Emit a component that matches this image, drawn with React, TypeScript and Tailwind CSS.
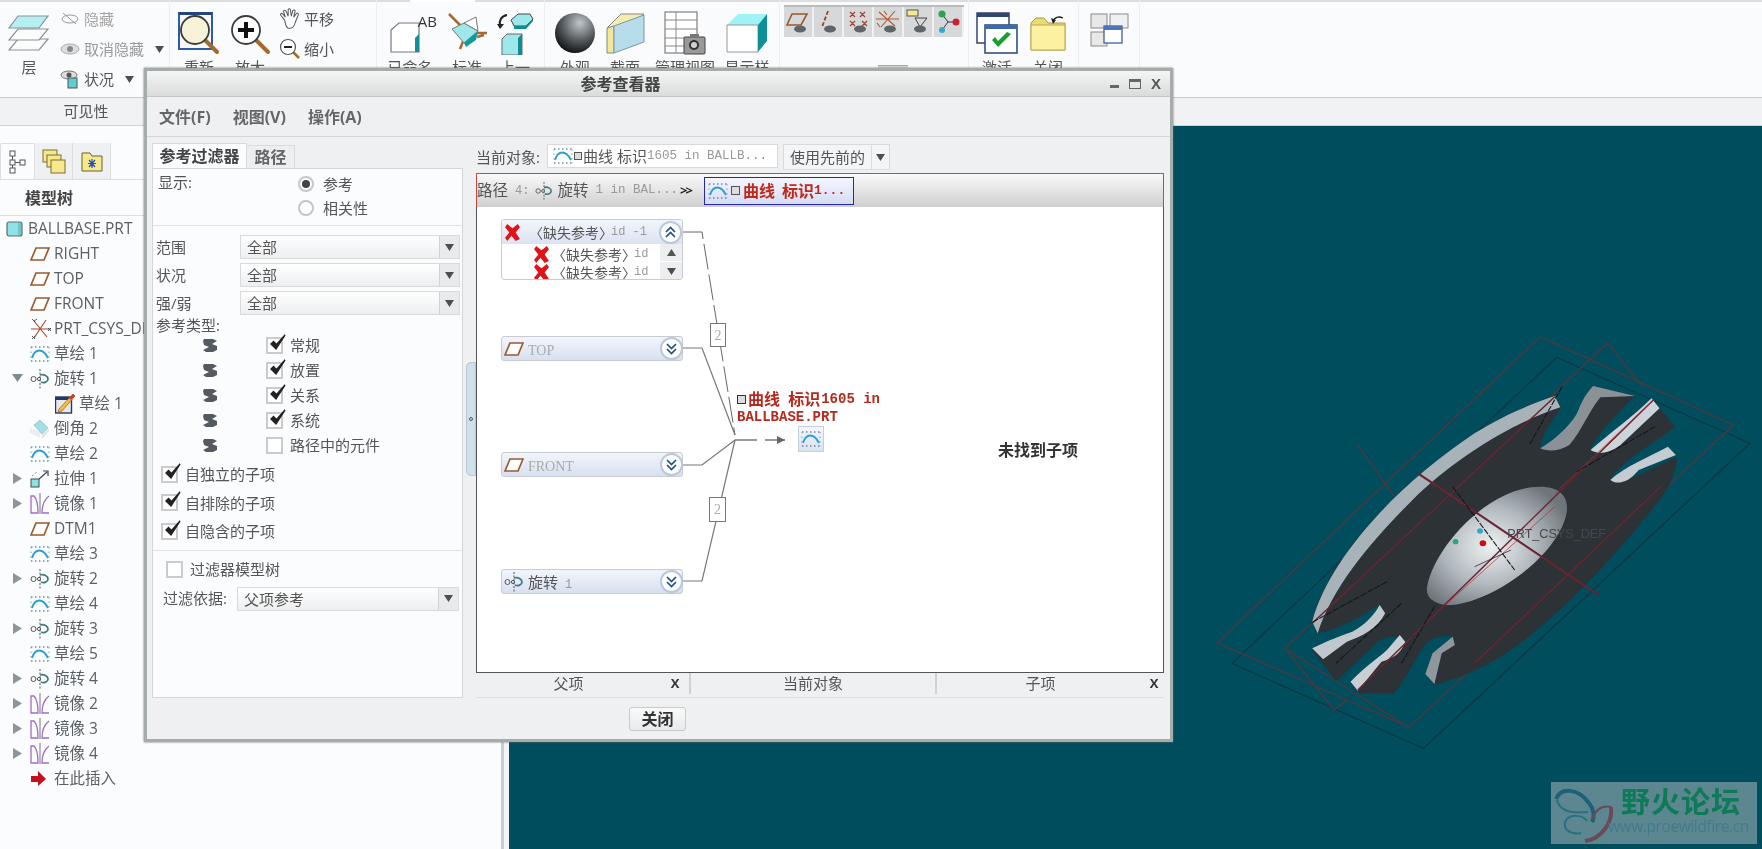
import React from "react";

const sans = "font-['Open_Sans','Noto_Sans_CJK_SC',sans-serif]";
const mono = "font-['Liberation_Mono','Noto_Sans_CJK_SC',monospace]";
const serif = "font-['Liberation_Serif','Noto_Sans_CJK_SC',serif]";

const Plane = ({ s = 20 }: { s?: number }) => (
  <svg width={s} height={s * 0.8} viewBox="0 0 20 16"><path d="M6 2H19L14 14H1Z" fill="#fff" stroke="#9a5a2c" strokeWidth="1.7" /></svg>
);
const Sketch = () => (
  <svg width="20" height="20" viewBox="0 0 20 20">
    <path d="M1 3H19M1 17H19" stroke="#33567a" strokeWidth="1.1" strokeDasharray="1.5 2.5" />
    <path d="M1 3V17M19 3V17" stroke="#7aa" strokeWidth="1" strokeDasharray="1.5 3" />
    <path d="M2 14C5 4 13 4 18 14" fill="none" stroke="#2c9fd0" strokeWidth="1.8" />
  </svg>
);
const Revolve = ({ s = 20 }: { s?: number }) => (
  <svg width={s} height={s} viewBox="0 0 20 20" fill="none">
    <path d="M10 0V20" stroke="#555" strokeWidth="1" strokeDasharray="2 1.5" />
    <circle cx="3.5" cy="10" r="2.5" stroke="#555" />
    <path d="M10 6C14 5 18 7 18 10C18 13 14 14.5 11 13" stroke="#3c7d83" strokeWidth="1.8" />
    <circle cx="9" cy="10" r="1.6" stroke="#555" />
  </svg>
);
const Mirror = () => (
  <svg width="20" height="21" viewBox="0 0 20 21" fill="none" stroke="#a06cc8" strokeWidth="1.3">
    <path d="M1 3H4C7 6 8 12 8 20H1Z" />
    <path d="M19 3C15 6 12 12 12 20H19" />
    <path d="M10 0V21" stroke="#777" strokeWidth="1" />
  </svg>
);
const Extrude = () => (
  <svg width="20" height="20" viewBox="0 0 20 20" fill="none">
    <rect x="1" y="10" width="8" height="8" fill="#8fe0e0" stroke="#445" />
    <path d="M9 10L17 3M13 2H18V7" stroke="#445" strokeWidth="1.2" />
    <path d="M2 7L7 3" stroke="#888" strokeDasharray="2 2" />
  </svg>
);
const SketchEdit = () => (
  <svg width="20" height="21" viewBox="0 0 20 21">
    <rect x="0.5" y="4" width="16" height="16" fill="#e8e8e8" stroke="#223a6a" strokeWidth="1.4" />
    <rect x="0.5" y="4" width="16" height="3" fill="#223a6a" />
    <path d="M4 16L18 1L20 3L7 18L3 19Z" fill="#f0c040" stroke="#a05020" strokeWidth=".7" />
    <path d="M14 5L18 1L20 3L16 7Z" fill="#d04020" />
  </svg>
);
const Chamfer = () => (
  <svg width="20" height="20" viewBox="0 0 20 20">
    <path d="M0 14L10 19V13L0 9Z" fill="#eee" />
    <path d="M4 6L10 1L18 9L12 15Z" fill="#9fe0e6" stroke="#8ab" strokeWidth=".6" />
    <path d="M12 15V20L19 12L18 9Z" fill="#e4e4e4" />
  </svg>
);
const Csys = () => (
  <svg width="22" height="22" viewBox="0 0 22 22" stroke="#444" strokeWidth=".9" fill="none">
    <path d="M4 3L17 19M16 2L4 20M1 11H21" stroke="#a8462a" strokeWidth="1.1" />
    <path d="M2 1L5 4M7 1L4 3M18 10L21 13M21 10L18 13M2 18L5 21M5 18L2 21" />
  </svg>
);
const Part = () => (
  <svg width="17" height="16" viewBox="0 0 17 16"><rect x="1" y="1" width="15" height="14" rx="2" fill="#8fe3e6" stroke="#5a6a70" strokeWidth="1.2" /><path d="M12 1H15V15H12Z" fill="#5aa" opacity=".5" /></svg>
);
const RedX = ({ s = 17 }: { s?: number }) => (
  <svg width={s} height={s} viewBox="0 0 16 16"><path d="M3 0L8 4L13 0L15 3L11 8L15 14L11 16L7 11L3 16L1 13L5 8L1 3Z" fill="#e01418" /></svg>
);
const Zig = () => (
  <svg width="16" height="15" viewBox="0 0 16 15"><path d="M2 1H11L15 3L10 6L15 8V12L11 14H4L1 12L7 9L2 7L1 3Z" fill="#555a62" /></svg>
);
const Tri = ({ open }: { open?: boolean }) => (
  <svg width="11" height="11" viewBox="0 0 11 11">{open ? <path d="M0 1H11L5.5 9Z" fill="#7d8a92" /> : <path d="M1 0L10 5.5L1 11Z" fill="#8b959c" />}</svg>
);
const Down = ({ c = "#4a4f55" }: { c?: string }) => (
  <svg width="9" height="7" viewBox="0 0 9 7"><path d="M0 0H9L4.5 7Z" fill={c} /></svg>
);
const Check = ({ on = true }: { on?: boolean }) => (
  <span className="relative block w-[17px] h-[17px] shrink-0 border-2 border-[#c9cbcd] bg-white">
    {on && (
      <svg className="absolute left-[1px] top-[-6px]" width="20" height="20" viewBox="0 0 20 20"><path d="M2 11L7 16L16 2L7.5 11.5L4.5 8.5Z" fill="#222" stroke="#222" strokeWidth="1.4" /></svg>
    )}
  </span>
);
const Radio = ({ on }: { on?: boolean }) => (
  <span className="flex items-center justify-center w-[16px] h-[16px] rounded-full border-2 border-[#c4c6c8] bg-white">
    {on && <span className="w-[8px] h-[8px] rounded-full bg-[#444]" />}
  </span>
);
const Chev = ({ up }: { up?: boolean }) => (
  <span className="flex items-center justify-center w-[23px] h-[23px] rounded-full bg-white border-2 border-[#b9c8dc]">
    <svg width="11" height="12" viewBox="0 0 11 12" fill="none" stroke="#1f4f86" strokeWidth="1.7">
      {up ? <path d="M1 6L5.5 1.5L10 6M1 11L5.5 6.5L10 11" /> : <path d="M1 1L5.5 5.5L10 1M1 6L5.5 10.5L10 6" />}
    </svg>
  </span>
);

const BigBtn = ({ w, label, children }: { w: string; label: string; children: React.ReactNode }) => (
  <div className={`${w} flex flex-col items-center pt-[8px] shrink-0`}>
    <div className="h-[50px] flex items-center justify-center">{children}</div>
    <span className="text-[15px] leading-[18px] text-[#555] whitespace-nowrap">{label}</span>
  </div>
);

const Layers = () => (
  <svg width="42" height="38" viewBox="0 0 42 38" fill="#fbfcfc" stroke="#8a9296" strokeWidth="1.2">
    <path d="M10 25H40L31 36H1Z" />
    <path d="M10 15H40L31 26H1Z" />
    <path d="M10 2H40L31 14H1Z" fill="#b4f0f2" />
  </svg>
);
const Magnifier = ({ plus }: { plus?: boolean }) => (
  <svg width="42" height="44" viewBox="0 0 42 44" fill="none">
    {!plus && <rect x="1" y="2" width="33" height="36" fill="#f6f8fb" stroke="#2c5aa8" strokeWidth="2" />}
    {!plus && <rect x="1" y="1" width="33" height="3" fill="#23447e" />}
    <path d="M26 28L39 41" stroke="#a56a2c" strokeWidth="4" strokeLinecap="round" />
    <circle cx="17" cy="19" r="14" fill={plus ? "#fff" : "#f8f3d8"} stroke="#3c3c3c" strokeWidth="1.8" />
    {plus && <path d="M17 11V27M9 19H25" stroke="#111" strokeWidth="4" />}
  </svg>
);
const Hand = () => (
  <svg width="24" height="24" viewBox="0 0 24 24" fill="#fff" stroke="#555" strokeWidth="1.1">
    <path d="M6 13L2 8C1 6 3 5 4.5 7L7 10L5 4C5 2 7 2 8 4L10 9L10 2C10 0.5 12 0.5 12.5 2L13.5 9L15 3C16 1.5 18 2 17.5 4L16 10L19 6C20 5 21.5 6 21 7.5L18 15C17 20 14 23 10 22C7 21 7 16 6 13Z" />
  </svg>
);
const ZoomOut = () => (
  <svg width="22" height="22" viewBox="0 0 22 22" fill="none">
    <path d="M13 13L20 20" stroke="#a56a2c" strokeWidth="2.5" />
    <circle cx="9" cy="9" r="7.5" fill="#fff" stroke="#555" strokeWidth="1.2" />
    <path d="M5 9H13" stroke="#222" strokeWidth="2" />
  </svg>
);
const Named = () => (
  <div className="relative w-[42px] h-[42px]">
    <svg width="42" height="42" viewBox="0 0 42 42">
      <path d="M2 18L10 11H30V40H2Z" fill="#fff" stroke="#778" strokeWidth="1.2" />
      <path d="M30 22L26 26V40H30Z" fill="#158f96" />
    </svg>
    <span className="absolute right-[-6px] top-[1px] text-[15px] leading-[16px] text-[#333]">AB</span>
  </div>
);
const Standard = () => (
  <svg width="42" height="44" viewBox="0 0 42 44">
    <path d="M3 3L14 14M31 26L38 24M14 38L18 28M30 22H41" stroke="#a66a30" strokeWidth="2.5" />
    <path d="M6 18L18 12L32 20L18 32Z" fill="#9fe8ea" stroke="#777" />
    <path d="M18 12L30 6L32 20Z" fill="#fff" stroke="#777" />
    <path d="M18 32L32 20L30 29L20 36Z" fill="#0f9aa0" />
  </svg>
);
const Previous = () => (
  <svg width="38" height="44" viewBox="0 0 38 44">
    <path d="M15 9L22 3H34L37 8L30 15H18Z" fill="#9fe8ea" stroke="#445" />
    <path d="M18 15H30L37 8V10L30 18H18Z" fill="#128d92" />
    <path d="M11 4C5 5 3 10 4 14" fill="none" stroke="#222" strokeWidth="2" />
    <path d="M1 13H8L4 18Z" fill="#222" />
    <path d="M6 28L11 23H26V44H6Z" fill="#9fe8ea" stroke="#667" />
    <path d="M22 27L26 23V44H22Z" fill="#128d92" />
  </svg>
);
const Section = () => (
  <svg width="40" height="42" viewBox="0 0 40 42">
    <path d="M2 16L16 2H39L26 12Z" fill="#f5eeb0" stroke="#888" />
    <path d="M2 16L9 14V41L2 41Z" fill="#f1e69a" stroke="#888" />
    <path d="M9 14L39 3V30L9 41Z" fill="#b7dcea" stroke="#7d96a6" />
  </svg>
);
const Views = () => (
  <svg width="42" height="44" viewBox="0 0 42 44">
    <rect x="1" y="1" width="32" height="41" fill="#fff" stroke="#666" />
    <path d="M1 9H33M1 18H33M1 27H33M1 35H33M12 1V42" stroke="#888" />
    <rect x="20" y="26" width="21" height="17" rx="1" fill="#999" stroke="#444" />
    <rect x="26" y="23" width="9" height="4" fill="#777" />
    <circle cx="30" cy="34" r="5" fill="#333" /><circle cx="30" cy="34" r="3" fill="#cfd4d8" />
  </svg>
);
const Cube = () => (
  <svg width="42" height="40" viewBox="0 0 42 40">
    <path d="M1 12L12 1H41L32 12Z" fill="#9ff2f6" />
    <path d="M1 12H32V39H1Z" fill="#fff" stroke="#999" />
    <path d="M32 12L41 1V28L32 39Z" fill="#0f9096" />
  </svg>
);
const Activate = () => (
  <svg width="42" height="42" viewBox="0 0 42 42">
    <rect x="1" y="1" width="32" height="30" fill="#fff" stroke="#31466f" strokeWidth="1.5" />
    <rect x="1" y="1" width="32" height="4" fill="#31466f" />
    <rect x="9" y="13" width="32" height="28" fill="#fff" stroke="#31507f" strokeWidth="1.6" />
    <rect x="9" y="13" width="32" height="4" fill="#3e6ca8" />
    <path d="M16 28L22 35L35 22L31 20L22 29L19 25Z" fill="#15a02e" />
  </svg>
);
const Folder = () => (
  <svg width="36" height="36" viewBox="0 0 36 36">
    <path d="M1 8L6 3H14L18 8H35V35H1Z" fill="#e9dc78" stroke="#a89a3c" />
    <path d="M1 10H35V35H1Z" fill="#fbf1a0" stroke="#b8a94a" />
    <path d="M23 7C24 2 29 1 33 3" fill="none" stroke="#222" strokeWidth="1.3" />
    <path d="M21 3L26 5L23 9Z" fill="#222" />
  </svg>
);
const Windows = () => (
  <svg width="40" height="34" viewBox="0 0 40 34">
    <rect x="1" y="1" width="16" height="14" fill="#e8e8e8" stroke="#8a8a8a" />
    <rect x="20" y="1" width="18" height="14" fill="#f0f0f0" stroke="#8a8a8a" />
    <rect x="1" y="19" width="16" height="14" fill="#e8e8e8" stroke="#8a8a8a" />
    <rect x="14" y="13" width="18" height="17" fill="#fff" stroke="#3f5f9f" strokeWidth="1.3" />
    <rect x="14" y="13" width="18" height="4" fill="#4e73b8" />
  </svg>
);
const MiniCell = ({ kind }: { kind: number }) => (
  <div className="w-[30px] h-[30px] flex items-center justify-center bg-[#d6d8da] border-r-2 border-[#eef0f1]">
    <svg width="26" height="26" viewBox="0 0 26 26" fill="none">
      {kind === 0 && <path d="M7 5H22L16 16H2Z" stroke="#9a5a2c" strokeWidth="1.6" />}
      {kind === 1 && <path d="M13 2L7 18" stroke="#a04020" strokeWidth="1.8" strokeDasharray="4 2" />}
      {kind === 2 && <path d="M5 3L10 8M10 3L5 8M15 3L20 8M20 3L15 8M5 12L10 17M10 12L5 17M17 12L22 17M22 12L17 17" stroke="#a0402a" strokeWidth="1.2" />}
      {kind === 3 && <path d="M4 3L20 17M20 2L6 18M1 10H24M9 2L12 6M2 14L5 18" stroke="#b05a30" strokeWidth="1.1" />}
      {kind === 4 && <><rect x="2" y="1" width="11" height="6" fill="#f4ea94" stroke="#555" /><path d="M10 9H22L15 18Z" stroke="#444" /></>}
      {kind === 5 && <><path d="M7 5L13 13H22M7 21L13 13" stroke="#334" /><circle cx="7" cy="5" r="3.5" fill="#2aa050" /><circle cx="7" cy="21" r="3" fill="#37a6c8" /><circle cx="21" cy="13" r="3.5" fill="#c8222c" /></>}
      {kind < 5 && <ellipse cx="15" cy="20" rx="6" ry="3.5" fill="#5e6468" />}
    </svg>
  </div>
);

const SmallRow = ({ icon, label, arrow }: { icon: React.ReactNode; label: string; arrow?: boolean }) => (
  <div className="flex items-center h-[30px] gap-[3px] whitespace-nowrap">
    <span className="w-[22px] flex justify-center">{icon}</span>
    <span>{label}</span>
    {arrow && <span className="ml-[8px]"><Down /></span>}
  </div>
);

const Ribbon = () => (
  <div className="flex h-[98px] text-[15px] text-[#555] border-b border-[#c9cbce]">
    <div className="w-[170px] flex shrink-0 border-r border-[#eceef0]">
      <BigBtn w="w-[58px]" label="层"><Layers /></BigBtn>
      <div className="pt-[4px] pl-[1px]">
        <div className="text-[#a4a4a4]"><SmallRow label="隐藏" icon={<svg width="20" height="14" viewBox="0 0 20 14" fill="none" stroke="#999"><ellipse cx="10" cy="7" rx="8" ry="4" /><path d="M3 1L16 12" /></svg>} /></div>
        <div className="text-[#9a9a9a]"><SmallRow label="取消隐藏" arrow icon={<svg width="20" height="12" viewBox="0 0 20 12"><ellipse cx="10" cy="6" rx="9" ry="5" fill="#ddd" stroke="#aaa" /><circle cx="10" cy="6" r="3" fill="#888" /></svg>} /></div>
        <SmallRow label="状况" arrow icon={<svg width="20" height="20" viewBox="0 0 20 20"><ellipse cx="9" cy="6" rx="8" ry="4" fill="#ddd" stroke="#777" /><circle cx="9" cy="6" r="2.5" fill="#555" /><rect x="8" y="9" width="9" height="10" fill="#5ccfd4" stroke="#555" /></svg>} />
      </div>
    </div>
    <div className="w-[207px] flex shrink-0 border-r border-[#eceef0]">
      <BigBtn w="w-[58px]" label="重新"><Magnifier /></BigBtn>
      <BigBtn w="w-[44px]" label="放大"><Magnifier plus /></BigBtn>
      <div className="pt-[4px] pl-[7px]">
        <SmallRow label="平移" icon={<Hand />} />
        <SmallRow label="缩小" icon={<ZoomOut />} />
      </div>
    </div>
    <div className="w-[168px] flex shrink-0 border-r border-[#eceef0]">
      <BigBtn w="w-[66px]" label="已命名"><Named /></BigBtn>
      <BigBtn w="w-[48px]" label="标准"><Standard /></BigBtn>
      <BigBtn w="w-[48px]" label="上一"><Previous /></BigBtn>
    </div>
    <div className="w-[235px] flex shrink-0 border-r border-[#eceef0]">
      <BigBtn w="w-[60px]" label="外观">
        <div className="w-[40px] h-[40px] rounded-full bg-[radial-gradient(circle_at_62%_25%,#c0c8cc,#565b5f_45%,#060606_85%)]" />
      </BigBtn>
      <BigBtn w="w-[40px]" label="截面"><Section /></BigBtn>
      <BigBtn w="w-[80px]" label="管理视图"><Views /></BigBtn>
      <BigBtn w="w-[44px]" label="显示样"><Cube /></BigBtn>
    </div>
    <div className="w-[189px] shrink-0 pl-[4px] pt-[5px] border-r border-[#eceef0]">
      <div className="flex border-t-2 border-[#b8babc] w-fit">
        {[0, 1, 2, 3, 4, 5].map((k) => <MiniCell key={k} kind={k} />)}
      </div>
      <div className="flex justify-end items-end gap-[22px] pr-[60px] pt-[28px]">
        <span className="w-[4px] h-[2px] bg-[#666]" />
        <span className="w-[4px] h-[2px] bg-[#666]" />
        <span className="w-[30px] h-[10px] bg-[#d6d8da] border-t border-[#aaa]" />
      </div>
    </div>
    <div className="w-[110px] flex shrink-0 border-r border-[#eceef0]">
      <BigBtn w="w-[56px]" label="激活"><Activate /></BigBtn>
      <BigBtn w="w-[46px]" label="关闭"><Folder /></BigBtn>
    </div>
    <div className="w-[61px] flex justify-center pt-[13px] pl-[2px] shrink-0 border-r border-[#eceef0]"><Windows /></div>
  </div>
);

type Row = { label: string; icon: React.ReactNode; tri?: "open" | "closed"; child?: boolean; top?: boolean };
const P = <Plane />;
const S = <Sketch />;
const R = <Revolve />;
const M = <Mirror />;
const rows: Row[] = [
  { label: "BALLBASE.PRT", icon: <Part />, top: true },
  { label: "RIGHT", icon: P },
  { label: "TOP", icon: P },
  { label: "FRONT", icon: P },
  { label: "PRT_CSYS_DEF", icon: <Csys /> },
  { label: "草绘 1", icon: S },
  { label: "旋转 1", icon: R, tri: "open" },
  { label: "草绘 1", icon: <SketchEdit />, child: true },
  { label: "倒角 2", icon: <Chamfer /> },
  { label: "草绘 2", icon: S },
  { label: "拉伸 1", icon: <Extrude />, tri: "closed" },
  { label: "镜像 1", icon: M, tri: "closed" },
  { label: "DTM1", icon: P },
  { label: "草绘 3", icon: S },
  { label: "旋转 2", icon: R, tri: "closed" },
  { label: "草绘 4", icon: S },
  { label: "旋转 3", icon: R, tri: "closed" },
  { label: "草绘 5", icon: S },
  { label: "旋转 4", icon: R, tri: "closed" },
  { label: "镜像 2", icon: M, tri: "closed" },
  { label: "镜像 3", icon: M, tri: "closed" },
  { label: "镜像 4", icon: M, tri: "closed" },
  { label: "在此插入", icon: <svg width="16" height="16" viewBox="0 0 16 16"><path d="M1 5H8V0L16 8L8 15V11H1Z" fill="#c8101c" /></svg> },
];

const TreeRow = ({ r }: { r: Row }) => {
  if (r.top)
    return (
      <div className="flex items-center h-[25px] pl-[6px] gap-[5px]">
        {r.icon}
        <span>{r.label}</span>
      </div>
    );
  return (
    <div className="flex items-center h-[25px] pl-[12px] whitespace-nowrap">
      <span className="w-[18px] shrink-0 flex">{r.tri && <Tri open={r.tri === "open"} />}</span>
      {r.child && <span className="w-[25px] shrink-0" />}
      <span className="w-[24px] shrink-0 flex items-center">{r.icon}</span>
      <span>{r.label}</span>
    </div>
  );
};

const LeftPanel = () => (
  <div className="w-[509px] shrink-0 h-full flex">
    <div className="w-[501px] shrink-0 bg-[#fbfcfe] pt-[17px] text-[15.5px] text-[#5a5f63] overflow-hidden">
      <div className="flex h-[37px] border-b border-[#dcdee0]">
        <div className="w-[35px] border border-b-0 border-[#dcdee0] bg-[#fbfcfe] flex items-center justify-center rounded-t-[2px]">
          <svg width="18" height="24" viewBox="0 0 18 24" fill="#fff" stroke="#555"><rect x="1" y="1" width="5" height="5" /><rect x="1" y="10" width="5" height="5" /><rect x="1" y="18" width="5" height="5" /><rect x="11" y="10" width="5" height="5" /><path d="M3.5 6V10M3.5 15V18M6 12.5H11" /></svg>
        </div>
        <div className="w-[38px] border-r border-[#dcdee0] bg-[#eff0f2] flex items-center justify-center">
          <svg width="24" height="26" viewBox="0 0 24 26" fill="#f6e88c" stroke="#7a6f2a"><rect x="1" y="2" width="14" height="12" /><rect x="5" y="7" width="14" height="12" /><rect x="9" y="12" width="14" height="13" /></svg>
        </div>
        <div className="w-[38px] border-r border-[#dcdee0] bg-[#eff0f2] flex items-center justify-center">
          <svg width="22" height="22" viewBox="0 0 22 22"><path d="M1 3H9L11 6H21V21H1Z" fill="#f6e88c" stroke="#6a6230" /><path d="M11 9V18M7 13.5H15M8 10L14 17M14 10L8 17" stroke="#2050c0" strokeWidth="1.2" /></svg>
        </div>
      </div>
      <div className="h-[36px] flex items-center pl-[25px] font-bold text-[#444] text-[16px] border-b border-[#dcdee0]">模型树</div>
      {rows.map((r, i) => <TreeRow key={i} r={r} />)}
    </div>
    <div className="flex-1 border-l-[3px] border-[#c9ccce] bg-[#f3f4f6]" />
  </div>
);

const Drop = ({ w, text }: { w: string; text: string }) => (
  <div className={`${w} h-[24px] flex border border-[#d8dadc] bg-gradient-to-b from-white to-[#eceef0] shrink-0`}>
    <span className="flex-1 pl-[6px] leading-[22px] text-[15px] text-[#555]">{text}</span>
    <span className="w-[20px] border-l border-[#d0d2d4] flex items-center justify-center bg-[#e8eaec]"><Down /></span>
  </div>
);

const LabelRow = ({ label, mt }: { label: string; mt: string }) => (
  <div className={`flex items-center h-[24px] ${mt}`}>
    <span className="w-[87px] pl-[3px] text-[15px] text-[#555]">{label}</span>
    <Drop w="w-[220px]" text="全部" />
  </div>
);

const TypeRow = ({ label, on }: { label: string; on: boolean }) => (
  <div className="flex items-center h-[25px] pl-[49px]">
    <span className="w-[64px] shrink-0"><Zig /></span>
    <Check on={on} />
    <span className="ml-[7px] text-[15px] text-[#555]">{label}</span>
  </div>
);

const ChildRow = ({ label }: { label: string }) => (
  <div className="flex items-center h-[28.5px] pl-[8px]">
    <Check />
    <span className="ml-[7px] text-[15px] text-[#555]">{label}</span>
  </div>
);

const Filter = () => (
  <div className="w-[316px] shrink-0 pl-[5px] pt-[6px]">
    <div className="flex h-[25px] items-end">
      <div className="w-[95px] h-[25px] border border-b-0 border-[#d8dadc] bg-[#fbfcfe] text-[16px] font-bold text-[#444] flex items-center justify-center whitespace-nowrap">参考过滤器</div>
      <div className="w-[48px] h-[23px] border-t border-r border-[#d8dadc] bg-[#eceef0] text-[16px] font-bold text-[#666] flex items-center justify-center">路径</div>
    </div>
    <div className="h-[530px] w-[311px] border border-[#d4d6d8] bg-[#fbfcfe]">
      <div className="h-[57px] flex border-b border-[#e0e2e4]">
        <span className="w-[145px] pl-[5px] pt-[2px] text-[15px] text-[#555]">显示:</span>
        <div className="pt-[3px] text-[15px] text-[#555]">
          <div className="flex items-center gap-[9px] h-[24px]"><Radio on /><span>参考</span></div>
          <div className="flex items-center gap-[9px] h-[24px]"><Radio /><span>相关性</span></div>
        </div>
      </div>
      <LabelRow label="范围" mt="mt-[9px]" />
      <LabelRow label="状况" mt="mt-[4px]" />
      <LabelRow label="强/弱" mt="mt-[4px]" />
      <div className="h-[18px] pl-[3px] text-[15px] text-[#555] leading-[20px]">参考类型:</div>
      <TypeRow label="常规" on />
      <TypeRow label="放置" on />
      <TypeRow label="关系" on />
      <TypeRow label="系统" on />
      <TypeRow label="路径中的元件" on={false} />
      <div className="h-[2px]" />
      <ChildRow label="自独立的子项" />
      <ChildRow label="自排除的子项" />
      <ChildRow label="自隐含的子项" />
      <div className="mt-[4px] border-t border-[#e0e2e4] pt-[6px] pl-[13px] flex items-center h-[33px]">
        <Check on={false} />
        <span className="ml-[7px] text-[15px] text-[#555]">过滤器模型树</span>
      </div>
      <div className="flex items-center h-[24px] pl-[10px] mt-[4px]">
        <span className="w-[74px] text-[15px] text-[#555] whitespace-nowrap">过滤依据:</span>
        <Drop w="w-[222px]" text="父项参考" />
      </div>
    </div>
  </div>
);

const NodeIconBox = () => (
  <div className="absolute left-[321px] top-[219px] w-[26px] h-[26px] border border-[#c4cede] bg-gradient-to-b from-[#f4f7fb] to-[#d9e2f0] flex items-center justify-center"><Sketch /></div>
);

const Node = ({ cls, label, icon, up }: { cls: string; label: React.ReactNode; icon: React.ReactNode; up?: boolean }) => (
  <div className={`absolute left-[24px] w-[182px] h-[25px] ${cls} flex items-center pl-[2px] rounded-[3px] border border-[#c8ccd2] bg-gradient-to-b from-[#f2f5fb] to-[#d8e0f0]`}>
    {icon}
    <span className="ml-[4px] flex-1 whitespace-nowrap">{label}</span>
    <span className="mr-[-1px]"><Chev up={up} /></span>
  </div>
);

const Diagram = () => (
  <div className="relative flex-1 bg-white border-x border-b border-[#50555a] overflow-hidden">
    <svg className="absolute inset-0" width="687" height="466" viewBox="0 0 687 466" fill="none">
      <path d="M206 25H225L258 228" stroke="#666" strokeWidth="1" strokeDasharray="26 5" />
      <path d="M206 141H225L258 228" stroke="#777" strokeWidth="1.2" />
      <path d="M206 258H225L258 233" stroke="#777" strokeWidth="1.2" />
      <path d="M206 374H225L258 233" stroke="#777" strokeWidth="1.2" />
      <path d="M258 233H308" stroke="#777" strokeWidth="1.4" strokeDasharray="22 8" />
      <path d="M308 233L300 229V237Z" fill="#666" />
    </svg>
    <div className="absolute left-[24px] top-[12px] w-[182px] h-[61px] rounded-[3px] border border-[#c8ccd2] bg-white overflow-hidden">
      <div className="h-[24px] flex items-center pl-[2px] bg-gradient-to-b from-[#f2f5fb] to-[#dbe2f2]">
        <RedX />
        <span className="ml-[8px] text-[14px] text-[#555] whitespace-nowrap">〈缺失参考〉</span>
        <span className={`ml-[-2px] text-[12px] text-[#999] whitespace-nowrap ${mono}`}>id -1</span>
        <span className="ml-auto"><Chev up /></span>
      </div>
      <div className="flex">
        <div className="flex-1 pl-[31px] text-[14px] text-[#555] overflow-hidden h-[36px]">
          <div className="flex items-center h-[20px] whitespace-nowrap"><RedX /><span className="ml-[2px]">〈缺失参考〉</span><span className={`ml-[-2px] text-[12px] text-[#999] ${mono}`}>id</span></div>
          <div className="flex items-center h-[16px] overflow-hidden whitespace-nowrap"><RedX /><span className="ml-[2px]">〈缺失参考〉</span><span className={`ml-[-2px] text-[12px] text-[#999] ${mono}`}>id</span></div>
        </div>
        <div className="w-[22px] shrink-0 bg-[#eceef0]">
          <div className="h-[18px] flex items-center justify-center border-b border-white"><svg width="9" height="7" viewBox="0 0 9 7"><path d="M0 7H9L4.5 0Z" fill="#555" /></svg></div>
          <div className="h-[18px] flex items-center justify-center"><Down /></div>
        </div>
      </div>
    </div>
    <Node cls="top-[129px]" icon={<Plane />} label={<span className={`text-[14px] text-[#aaa] ${serif}`}>TOP</span>} />
    <Node cls="top-[245px]" icon={<Plane />} label={<span className={`text-[14px] text-[#aaa] ${serif}`}>FRONT</span>} />
    <Node cls="top-[362px]" icon={<Revolve />} label={<span className="text-[15px] text-[#555]">旋转<span className={`ml-[7px] text-[12px] text-[#999] ${mono}`}>1</span></span>} />
    <div className={`absolute left-[233px] top-[116px] w-[16px] h-[24px] border border-[#777] bg-white flex items-center justify-center text-[14px] text-[#aaa] ${serif}`}>2</div>
    <div className={`absolute left-[232px] top-[290px] w-[17px] h-[25px] border border-[#777] bg-white flex items-center justify-center text-[14px] text-[#aaa] ${serif}`}>2</div>
    <div className="absolute left-[260px] top-[183px] w-[160px] text-[#b52a1e] font-bold leading-[18px]">
      <div className="flex items-center whitespace-pre">
        <span className="w-[9px] h-[9px] border border-[#333] mr-[2px] bg-[#ddd]" />
        <span className="text-[16px]">曲线 </span><span className="text-[16px] ml-[4px]">标识</span><span className={`text-[14px] ml-[1px] ${mono}`}>1605 in</span>
      </div>
      <div className={`text-[14px] ${mono}`}>BALLBASE.PRT</div>
    </div>
    <NodeIconBox />
    <div className="absolute left-[484px] top-[231px] w-[154px] text-center text-[16px] font-bold text-[#333]">未找到子项</div>
  </div>
);

const RightPane = () => (
  <div className="w-[688px] shrink-0 flex flex-col pt-[7px] ml-[13px] relative">
    <div className="flex items-center h-[26px] text-[15px] text-[#555]">
      <span className="w-[71px] whitespace-nowrap">当前对象:</span>
      <div className="w-[231px] h-[24px] border border-[#d8dadc] bg-white flex items-center pl-[5px] whitespace-nowrap mb-[2px] overflow-hidden">
        <Sketch />
        <span className="w-[8px] h-[8px] border border-[#555] mx-[1px] bg-[#ddd]" />
        <span>曲线 标识</span><span className={`text-[12.5px] text-[#999] ${mono}`}>1605 in BALLB...</span>
      </div>
      <div className="ml-[5px] w-[107px] h-[26px] border border-[#d8dadc] bg-[#f4f5f6] flex items-center">
        <span className="flex-1 text-center">使用先前的</span>
        <span className="w-[18px] h-full border-l border-[#d8dadc] flex items-center justify-center"><Down /></span>
      </div>
    </div>
    <div className="mt-[3px] h-[500px] flex flex-col">
      <div className="h-[34px] border border-b-0 border-[#c8483c] bg-gradient-to-b from-[#fafafa] to-[#cfcfcf] flex items-center whitespace-nowrap text-[15.5px] text-[#555]">
        <span>路径</span>
        <span className={`ml-[7px] text-[12px] text-[#999] ${mono}`}>4:</span>
        <span className="ml-[6px]"><Revolve s={18} /></span>
        <span className="ml-[4px]">旋转</span>
        <span className={`ml-[7px] text-[12.5px] text-[#999] ${mono}`}>1 in BAL...</span>
        <span className="ml-[2px] w-[20px] text-[13px] font-bold text-[#222] tracking-[-2px]">&gt;&gt;</span>
        <div className="ml-[4px] w-[150px] h-[28px] border-[1.5px] border-[#2626b0] bg-gradient-to-b from-[#f4f6ff] to-[#d5dcf4] flex items-center pl-[3px] overflow-hidden">
          <Sketch />
          <span className="w-[9px] h-[9px] border border-[#555] mx-[3px] bg-[#ddd] shrink-0" />
          <span className="text-[16px] font-bold text-[#c02818]">曲线</span>
          <span className="ml-[7px] text-[16px] font-bold text-[#c02818]">标识</span>
          <span className={`text-[13px] font-bold text-[#c02818] ${mono}`}>1...</span>
        </div>
      </div>
      <Diagram />
    </div>
    <div className="h-[21px] flex text-[15px] text-[#555]">
      <div className="w-[215px] flex items-center border-r-2 border-[#cfd1d3]">
        <span className="flex-1 text-center">父项</span>
        <span className="w-[28px] text-center font-bold text-[#333] text-[13px]">X</span>
      </div>
      <div className="w-[246px] flex items-center justify-center border-r-2 border-[#cfd1d3]">当前对象</div>
      <div className="flex-1 flex items-center">
        <span className="flex-1 text-center">子项</span>
        <span className="w-[20px] text-center font-bold text-[#333] text-[13px]">X</span>
      </div>
    </div>
    <div className="mt-[3px] h-px bg-[#dcdee0]" />
  </div>
);

const Dialog = () => (
  <div className="absolute left-[144px] top-[68px] w-[1029px] h-[674px] border-[3px] border-[#a6abab] bg-[#eef0f2] flex flex-col shadow-[0_0_2px_#666]">
    <div className="h-[26px] shrink-0 relative flex items-center justify-center bg-gradient-to-b from-[#f4f5f5] to-[#dadcdc] border-b border-[#c4c6c8]">
      <span className="mr-[76px] text-[16px] font-bold text-[#444]">参考查看器</span>
      <div className="absolute right-[9px] top-[6px] flex items-center gap-[10px]">
        <span className="w-[9px] h-[3px] mt-[4px] bg-[#666]" />
        <span className="w-[12px] h-[10px] border border-t-[3px] border-[#666]" />
        <span className="text-[15px] leading-[14px] font-bold text-[#555] font-['Liberation_Sans',sans-serif]">X</span>
      </div>
    </div>
    <div className="h-[40px] shrink-0 flex items-center pl-[12px] gap-[22px] border-b border-[#d4d6d8] text-[16px] font-bold text-[#666]">
      <span>文件(F)</span><span>视图(V)</span><span>操作(A)</span>
    </div>
    <div className="flex h-[561px] shrink-0 relative">
      <Filter />
      <div className="absolute left-[319px] top-[225px] w-[10px] h-[114px] rounded-l-[5px] bg-[#cfe0ea] border border-[#b8c8d2] flex items-center justify-center">
        <span className="w-[4px] h-[4px] rounded-full border border-[#556]" />
      </div>
      <RightPane />
    </div>
    <div className="flex-1 flex justify-center pt-[9px] pr-[2px]">
      <div className="w-[57px] h-[24px] rounded-[3px] border border-[#c8cacc] bg-gradient-to-b from-[#fafafa] to-[#e8eaec] flex items-center justify-center text-[16px] font-bold text-[#333]">关闭</div>
    </div>
  </div>
);

const Model = () => (
  <svg className="absolute left-[681px] top-[194px]" width="572" height="440" viewBox="0 0 1568 1320" preserveAspectRatio="none" fill="none">
    <defs>
      <radialGradient id="hole" cx="45%" cy="50%" r="60%">
        <stop offset="0" stopColor="#eef1f2" />
        <stop offset="0.55" stopColor="#b0b8be" />
        <stop offset="1" stopColor="#6e767c" />
      </radialGradient>
    </defs>
    <path d="M1005 112L1535 370L640 1285L115 1030Z" stroke="#12323c" strokeWidth="3" />
    <path d="M960 50L1490 315L600 1222L75 968Z" stroke="#3f3c44" strokeWidth="5" />
    <path d="M1145 68L260 985L600 1222M1145 68L1240 200M460 375L560 530M260 985L395 1170L430 1140" stroke="#3f3c44" strokeWidth="5" />
    <path d="M350 940L335 900C380 720 560 500 780 340C860 285 940 250 1000 228L1018 262C990 310 960 350 960 385C1000 400 1050 370 1065 300C1075 260 1085 220 1105 198L1220 228C1180 270 1120 340 1098 385C1110 410 1160 400 1200 350L1265 235L1330 320C1270 370 1190 420 1155 470C1190 500 1250 450 1335 410C1330 470 1310 510 1280 550C1160 720 960 950 820 1030C770 1060 720 1080 670 1095L645 1060L690 990L725 950C700 945 660 950 640 980C610 1030 590 1080 560 1120L465 1120L440 1085L540 1000L585 955C560 945 530 950 510 970C470 1010 430 1060 400 1082L335 990L440 945L530 880L520 855C480 880 410 930 350 940Z" fill="#2c3236" />
    <path d="M335 905C380 720 560 500 780 340C860 285 940 250 1000 228L1015 262C880 310 720 420 610 540C500 660 390 800 350 940Z" fill="#a8b2b9" />
    <path d="M1105 198L1220 228L1125 232C1090 280 1075 330 1040 375C1010 395 980 395 960 385C1000 360 1050 310 1065 270C1075 240 1090 215 1105 198Z" fill="#8a9298" />
    <path d="M1265 235L1287 265L1180 375C1150 400 1120 405 1098 390C1150 340 1215 290 1265 235Z" fill="#cdd4d9" />
    <path d="M1310 380L1332 405L1230 450C1200 490 1170 495 1152 480C1190 440 1260 410 1310 380Z" fill="#c5ccd1" />
    <path d="M520 855L535 880C515 925 470 950 430 965L365 1018L335 985C380 960 420 945 445 935C480 915 505 885 520 855Z" fill="#c0c8ce" />
    <path d="M575 945L590 965C580 1000 555 1015 525 1025L460 1112L440 1085C480 1040 520 1010 540 990Z" fill="#c8cfd4" />
    <path d="M720 950L726 975L690 1000L670 1092L645 1062L665 1000Z" fill="#8f979d" />
    <path d="M650 800C670 680 820 500 960 500C1030 500 1050 550 1020 620C970 740 800 860 700 855C665 850 645 830 650 800Z" fill="url(#hole)" />
    <path d="M1000 230L335 910M1270 240L460 1110M1290 500L780 1030" stroke="#6b2530" strokeWidth="4" />
    <path d="M1000 560L700 855M1270 240L1000 520" stroke="#b02c34" strokeWidth="2" />
    <path d="M625 460L1120 825" stroke="#6b2530" strokeWidth="6" />
    <path d="M720 500L890 750M540 785L330 910M580 850L400 1030M670 860L580 1030M1020 200L930 375M1275 320L1060 455" stroke="#141618" strokeWidth="3" strokeDasharray="18 4" />
    <path d="M780 740L880 690" stroke="#141618" strokeWidth="2" />
    <circle cx="803" cy="670" r="9" fill="#c81018" /><circle cx="728" cy="665" r="8" fill="#2aa878" /><circle cx="795" cy="633" r="8" fill="#30a8c8" />
    <text x="870" y="655" fontSize="38" fill="#44484c" fontFamily="Liberation Sans, sans-serif" textLength="270" lengthAdjust="spacingAndGlyphs">PRT_CSYS_DEF</text>
  </svg>
);

const Watermark = () => (
  <div className="absolute right-[5px] bottom-[5px] w-[206px] h-[62px] bg-[#5c8790] overflow-hidden">
    <svg className="absolute left-[2px] top-[3px]" width="60" height="58" viewBox="0 0 60 58" fill="none">
      <path d="M3 14C8 2 25 3 36 18C41 24 42 32 39 37" stroke="#1d6078" strokeWidth="4" />
      <path d="M4 15C6 24 16 29 35 27" stroke="#2a6f82" strokeWidth="2" />
      <path d="M58 22C60 38 48 54 32 56" stroke="#6a4a58" strokeWidth="4" />
      <path d="M58 22C48 20 42 26 39 34" stroke="#6a4a58" strokeWidth="2" />
      <path d="M12 37C16 28 30 30 34 36M12 37C10 46 20 50 28 48" stroke="#2a6f82" strokeWidth="2" />
    </svg>
    <div className="absolute left-[70px] top-[7px] text-[29px] leading-[26px] font-bold text-[#0e7a58] whitespace-nowrap tracking-[1px]">野火论坛</div>
    <div className={`absolute left-[57px] top-[35px] text-[15.5px] leading-[18px] tracking-[-0.4px] text-[#3f7c8b] whitespace-nowrap ${sans}`}>www.proewildfire.cn</div>
  </div>
);

export default function App() {
  return (
    <div className={`relative w-[1762px] h-[849px] overflow-hidden bg-[#fafbfd] blur-[0.5px] ${sans}`}>
      <div className="flex h-[2px]">
        <div className="w-[410px] bg-[#dcdddf]" />
        <div className="w-[65px] bg-white" />
        <div className="flex-1 bg-[#dcdddf]" />
      </div>
      <div className="-mt-[2px]"><Ribbon /></div>
      <div className="h-[28px] flex bg-[#f1f2f4] border-b border-[#d0d2d4]">
        <div className="w-[172px] flex items-center justify-center text-[15px] text-[#555]">可见性</div>
      </div>
      <div className="flex h-[723px]">
        <LeftPanel />
        <div className="relative flex-1 bg-[#004d5d]"><Model /></div>
      </div>
      <Dialog />
      <Watermark />
    </div>
  );
}
